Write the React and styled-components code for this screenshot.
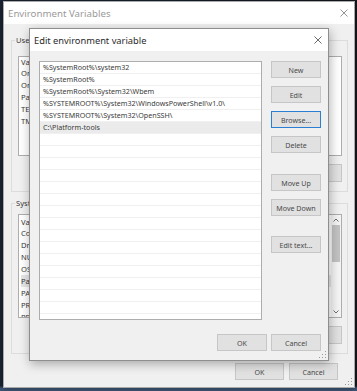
import React from "react";
import styled, { createGlobalStyle } from "styled-components";

const GlobalStyle = createGlobalStyle`
  html, body {
    margin: 0;
    padding: 0;
  }
  body {
    width: 357px;
    height: 391px;
    overflow: hidden;
    font-family: "Noto Sans", "Open Sans", sans-serif;
    color: #3a3a3a;
  }
  * {
    box-sizing: border-box;
  }
`;

const Desktop = styled.div`
  position: relative;
  width: 357px;
  height: 391px;
  overflow: hidden;
  background: linear-gradient(180deg, transparent 0%, transparent 98.6%, #3d5474 99.3%),
    linear-gradient(90deg, #1b2536 0%, #152030 50%, #15181e 100%);
`;

const Window = styled.div`
  position: absolute;
  left: ${(p) => p.$x}px;
  top: ${(p) => p.$y}px;
  width: ${(p) => p.$w}px;
  height: ${(p) => p.$h}px;
  display: flex;
  flex-direction: column;
  background: #f0f0f0;
  border: 1px solid ${(p) => (p.$active ? "#8e8e8e" : "#aaaaaa")};
  box-shadow: ${(p) =>
    p.$active ? "1px 3px 10px rgba(0, 0, 0, 0.3)" : "0 0 6px rgba(0, 0, 0, 0.4)"};
`;

const TitleBar = styled.div`
  flex: none;
  height: 22px;
  display: flex;
  align-items: center;
  justify-content: space-between;
  padding: 0 6px 0 4px;
  background: #ffffff;
  color: ${(p) => (p.$active ? "#2a2a2a" : "#9a9a9a")};
  font-size: ${(p) => (p.$active ? 9.3 : 9.7)}px;
`;

const CloseIcon = ({ color }) => (
  <svg width="8" height="8" viewBox="0 0 8 8">
    <path d="M0.5 0.5 L7.5 7.5 M7.5 0.5 L0.5 7.5" stroke={color} strokeWidth="0.9" />
  </svg>
);

const Grip = styled.svg`
  position: absolute;
  right: 2px;
  bottom: 2px;
`;

const ResizeGrip = () => (
  <Grip width="7" height="7" viewBox="0 0 7 7">
    {[
      [6, 0],
      [6, 3],
      [3, 3],
      [6, 6],
      [3, 6],
      [0, 6],
    ].map(([x, y]) => (
      <rect key={`${x}-${y}`} x={x} y={y} width="1" height="1" fill="#9a9a9a" />
    ))}
  </Grip>
);

/* ---------- background window: Environment Variables ---------- */

const EnvBody = styled.div`
  flex: 1;
  display: flex;
  flex-direction: column;
  padding: 11px 6px 0 7px;
`;

const Group = styled.fieldset`
  margin: 0 0 ${(p) => p.$after || 0}px 0;
  min-width: 0;
  padding: ${(p) => p.$top}px 5px 9px 6px;
  border: 1px solid #dcdcdc;
  display: flex;
  flex-direction: column;
`;

const Legend = styled.legend`
  margin-left: -3px;
  padding: 0 1px;
  font-size: 7.6px;
  line-height: 10px;
  color: #3a3a3a;
`;

const VarList = styled.div`
  height: ${(p) => p.$h}px;
  display: flex;
  background: #ffffff;
  border: 1px solid #adadad;
  overflow: hidden;
`;

const VarRows = styled.div`
  flex: 1;
  display: flex;
  flex-direction: column;
  padding-left: 2px;
  padding-top: ${(p) => p.$top || 0}px;
`;

const VarRow = styled.div`
  flex: none;
  height: ${(p) => (p.$header ? 10 : 12)}px;
  line-height: ${(p) => (p.$header ? 10 : 12)}px;
  font-size: 7.6px;
  color: #3a3a3a;
  white-space: nowrap;
  background: ${(p) => (p.$selected ? "#e6e6e6" : "transparent")};
`;

const ScrollBar = styled.div`
  width: 10px;
  display: flex;
  flex-direction: column;
  align-items: center;
  background: #f4f4f4;
`;

const ScrollArrow = styled.div`
  height: 10px;
  display: flex;
  align-items: center;
  justify-content: center;
`;

const ScrollThumb = styled.div`
  width: 8px;
  height: 37px;
  background: #c2c2c2;
`;

const ScrollFill = styled.div`
  flex: 1;
`;

const Chevron = ({ up }) => (
  <svg width="6" height="4" viewBox="0 0 6 4">
    <path
      d={up ? "M0.5 3.5 L3 1 L5.5 3.5" : "M0.5 0.5 L3 3 L5.5 0.5"}
      fill="none"
      stroke="#606060"
      strokeWidth="0.9"
    />
  </svg>
);

const ButtonRow = styled.div`
  display: flex;
  justify-content: flex-end;
  gap: ${(p) => p.$gap}px;
  margin-top: ${(p) => p.$top}px;
  padding-right: ${(p) => p.$right || 0}px;
`;

const Button = styled.button`
  flex: none;
  width: ${(p) => p.$w || 50}px;
  height: ${(p) => p.$h || 17}px;
  margin: ${(p) => p.$space || 0}px 0 0 0;
  padding: 0;
  background: #e1e1e1;
  border: 1px solid ${(p) => (p.$focused ? "#2a7fd4" : "#c6c6c6")};
  font-family: inherit;
  font-size: 7.1px;
  color: #4a4a4a;
  white-space: nowrap;
`;

const userVars = ["OneDrive", "OneDriveConsumer", "Path", "TEMP", "TMP"];
const systemVars = [
  "ComSpec",
  "DriverData",
  "NUMBER_OF_PROCESSORS",
  "OS",
  "Path",
  "PATHEXT",
  "PROCESSOR_ARCHITECTURE",
  "PROCESSOR_IDENTIFIER",
];

function EnvironmentWindow() {
  return (
    <Window $x={3} $y={1} $w={352} $h={387}>
      <TitleBar>
        <span>Environment Variables</span>
        <CloseIcon color="#8a8a8a" />
      </TitleBar>
      <EnvBody>
        <Group $top={11} $after={6}>
          <Legend>User variables for Admin</Legend>
          <VarList $h={100}>
            <VarRows>
              <VarRow $header>Variable</VarRow>
              {userVars.map((v) => (
                <VarRow key={v}>{v}</VarRow>
              ))}
            </VarRows>
          </VarList>
          <ButtonRow $gap={5} $top={8}>
            <Button $w={49} $h={18}>New...</Button>
            <Button $w={49} $h={18}>Edit...</Button>
            <Button $w={49} $h={18}>Delete</Button>
          </ButtonRow>
        </Group>
        <Group $top={6}>
          <Legend>System variables</Legend>
          <VarList $h={104}>
            <VarRows $top={2}>
              <VarRow $header>Variable</VarRow>
              {systemVars.map((v, i) => (
                <VarRow key={v} $selected={i === 4}>
                  {v}
                </VarRow>
              ))}
            </VarRows>
            <ScrollBar>
              <ScrollArrow>
                <Chevron up />
              </ScrollArrow>
              <ScrollThumb />
              <ScrollFill />
              <ScrollArrow>
                <Chevron />
              </ScrollArrow>
            </ScrollBar>
          </VarList>
          <ButtonRow $gap={5} $top={8}>
            <Button $w={49} $h={18}>New...</Button>
            <Button $w={49} $h={18}>Edit...</Button>
            <Button $w={49} $h={18}>Delete</Button>
          </ButtonRow>
        </Group>
        <ButtonRow $gap={5} $top={9} $right={10}>
          <Button $w={49}>OK</Button>
          <Button $w={49}>Cancel</Button>
        </ButtonRow>
      </EnvBody>
      <ResizeGrip />
    </Window>
  );
}

/* ---------- front dialog: Edit environment variable ---------- */

const DialogBody = styled.div`
  flex: 1;
  display: flex;
  flex-direction: column;
  padding: 10px 7px 9px 9px;
`;

const DialogMain = styled.div`
  display: flex;
  gap: 9px;
`;

const PathList = styled.div`
  width: 223px;
  height: 259px;
  display: flex;
  flex-direction: column;
  background: #ffffff;
  border: 1px solid #adadad;
  overflow: hidden;
`;

const PathRow = styled.div`
  flex: none;
  height: 12px;
  padding-left: 3px;
  border-bottom: 1px solid #f0f0f0;
  background: ${(p) => (p.$selected ? "#ebebeb" : "transparent")};
  font-size: 7.15px;
  line-height: 11px;
  color: #3a3a3a;
  white-space: nowrap;
`;

const SideColumn = styled.div`
  display: flex;
  flex-direction: column;
  width: 50px;
`;

const DialogFooter = styled.div`
  display: flex;
  justify-content: flex-end;
  gap: 4px;
  margin-top: auto;
`;

const paths = [
  "%SystemRoot%\\system32",
  "%SystemRoot%",
  "%SystemRoot%\\System32\\Wbem",
  "%SYSTEMROOT%\\System32\\WindowsPowerShell\\v1.0\\",
  "%SYSTEMROOT%\\System32\\OpenSSH\\",
  "C:\\Platform-tools",
];

function EditDialog() {
  const rows = [...paths, ...Array(16).fill("")];
  return (
    <Window $active $x={29} $y={28} $w={300} $h={333}>
      <TitleBar $active>
        <span>Edit environment variable</span>
        <CloseIcon color="#5a5a5a" />
      </TitleBar>
      <DialogBody>
        <DialogMain>
          <PathList>
            {rows.map((p, i) => (
              <PathRow key={i} $selected={i === 5}>
                {p}
              </PathRow>
            ))}
          </PathList>
          <SideColumn>
            <Button>New</Button>
            <Button $space={8}>Edit</Button>
            <Button $space={8} $focused>
              Browse...
            </Button>
            <Button $space={8}>Delete</Button>
            <Button $space={21}>Move Up</Button>
            <Button $space={8}>Move Down</Button>
            <Button $space={20}>Edit text...</Button>
          </SideColumn>
        </DialogMain>
        <DialogFooter>
          <Button>OK</Button>
          <Button>Cancel</Button>
        </DialogFooter>
      </DialogBody>
      <ResizeGrip />
    </Window>
  );
}

export default function App() {
  return (
    <Desktop>
      <GlobalStyle />
      <EnvironmentWindow />
      <EditDialog />
    </Desktop>
  );
}
